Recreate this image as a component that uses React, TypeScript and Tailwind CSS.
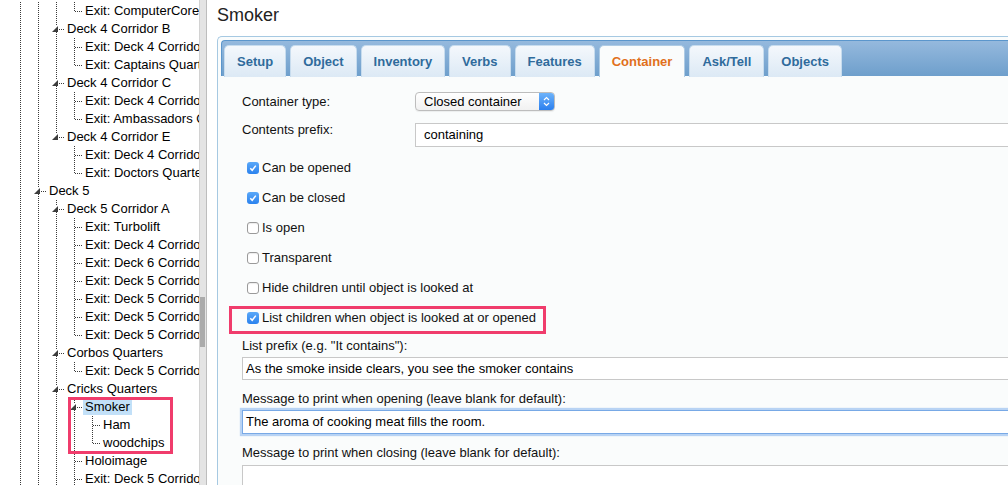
type Row = { t: string; d: number; g: number[]; last?: boolean; open?: boolean; sel?: boolean };

const rows: Row[] = [
  { t: "Exit: ComputerCore", d: 4, g: [1, 1, 1], last: true },
  { t: "Deck 4 Corridor B", d: 3, g: [1, 1], open: true },
  { t: "Exit: Deck 4 Corridor A", d: 4, g: [1, 1, 1] },
  { t: "Exit: Captains Quarters", d: 4, g: [1, 1, 1], last: true },
  { t: "Deck 4 Corridor C", d: 3, g: [1, 1], open: true },
  { t: "Exit: Deck 4 Corridor B", d: 4, g: [1, 1, 1] },
  { t: "Exit: Ambassadors Quarters", d: 4, g: [1, 1, 1], last: true },
  { t: "Deck 4 Corridor E", d: 3, g: [1, 1], open: true, last: true },
  { t: "Exit: Deck 4 Corridor D", d: 4, g: [1, 1, 0] },
  { t: "Exit: Doctors Quarters", d: 4, g: [1, 1, 0], last: true },
  { t: "Deck 5", d: 2, g: [1], open: true },
  { t: "Deck 5 Corridor A", d: 3, g: [1, 1], open: true },
  { t: "Exit: Turbolift", d: 4, g: [1, 1, 1] },
  { t: "Exit: Deck 4 Corridor E", d: 4, g: [1, 1, 1] },
  { t: "Exit: Deck 6 Corridor A", d: 4, g: [1, 1, 1] },
  { t: "Exit: Deck 5 Corridor B", d: 4, g: [1, 1, 1] },
  { t: "Exit: Deck 5 Corridor C", d: 4, g: [1, 1, 1] },
  { t: "Exit: Deck 5 Corridor D", d: 4, g: [1, 1, 1] },
  { t: "Exit: Deck 5 Corridor E", d: 4, g: [1, 1, 1], last: true },
  { t: "Corbos Quarters", d: 3, g: [1, 1], open: true },
  { t: "Exit: Deck 5 Corridor A", d: 4, g: [1, 1, 1], last: true },
  { t: "Cricks Quarters", d: 3, g: [1, 1], open: true },
  { t: "Smoker", d: 4, g: [1, 1, 1], open: true, sel: true },
  { t: "Ham", d: 5, g: [1, 1, 1, 1] },
  { t: "woodchips", d: 5, g: [1, 1, 1, 1], last: true },
  { t: "Holoimage", d: 4, g: [1, 1, 1] },
  { t: "Exit: Deck 5 Corridor A", d: 4, g: [1, 1, 1] },
];

const dot = { stroke: "#3a3a3a", strokeDasharray: "1 1", shapeRendering: "crispEdges" as const };

function Guide({ kind, last }: { kind: "line" | "none" | "leaf" | "open"; last?: boolean }) {
  return (
    <svg width="18" height="18" className="shrink-0">
      {kind === "line" && <line x1="9.5" y1="0" x2="9.5" y2="18" {...dot} />}
      {kind === "leaf" && (
        <>
          <line x1="9.5" y1="0" x2="9.5" y2={last ? 10 : 18} {...dot} />
          <line x1="10" y1="9.5" x2="17" y2="9.5" {...dot} />
        </>
      )}
      {kind === "open" && (
        <>
          <line x1="9.5" y1="0" x2="9.5" y2="6" {...dot} />
          {!last && <line x1="9.5" y1="12" x2="9.5" y2="18" {...dot} />}
          <polygon points="11,6 11,12 5,12" fill="#3c3c3c" />
          <line x1="12" y1="9.5" x2="17" y2="9.5" {...dot} />
        </>
      )}
    </svg>
  );
}

function Tree() {
  return (
    <div className="relative w-[199px] overflow-hidden pt-[2px]">
      {rows.map((r, i) => (
        <div key={i} className="flex h-[18px] items-center pl-[11px]">
          {r.g.map((on, k) => (
            <Guide key={k} kind={on ? "line" : "none"} />
          ))}
          <Guide kind={r.open ? "open" : "leaf"} last={r.last} />
          <span
            className={`whitespace-nowrap px-[2px] text-[13px] leading-[16px] text-black ${r.sel ? "bg-[#c2e0f8]" : ""}`}
          >
            {r.t}
          </span>
        </div>
      ))}
      <div className="absolute left-[68px] top-[397px] h-[57px] w-[105px] border-[3px] border-[#f03c6c]" />
    </div>
  );
}

function Check({ on }: { on?: boolean }) {
  return on ? (
    <span className="flex h-[12px] w-[12px] items-center justify-center rounded-[3px] bg-linear-to-b from-[#5aa8f8] to-[#2a82ee]">
      <svg width="10" height="10" viewBox="0 0 10 10">
        <path d="M2.3 5.3 L4.2 7.3 L7.8 2.6" fill="none" stroke="white" strokeWidth="1.5" />
      </svg>
    </span>
  ) : (
    <span className="h-[12px] w-[12px] rounded-[3px] border border-[#9a9a9a] bg-white shadow-[inset_0_1px_1px_rgba(0,0,0,0.08)]" />
  );
}

const tabs = ["Setup", "Object", "Inventory", "Verbs", "Features", "Container", "Ask/Tell", "Objects"];

const checks = [
  { t: "Can be opened", on: true },
  { t: "Can be closed", on: true },
  { t: "Is open" },
  { t: "Transparent" },
  { t: "Hide children until object is looked at" },
  { t: "List children when object is looked at or opened", on: true, mark: true },
];

export default function App() {
  return (
    <div className="flex h-[485px] w-[1008px] overflow-hidden bg-white font-['Liberation_Sans',Arial,sans-serif] text-[13px] text-[#111]">
      <Tree />
      <div className="w-[7px] shrink-0 border-l border-[#d2d2d2] bg-[#e4e4e4]">
        <div className="mt-[297px] h-[50px] w-[5px] bg-[#ababab]" />
      </div>
      <div className="w-px shrink-0 bg-[#bdbdbd]" />

      <div className="min-w-0 flex-1 overflow-hidden pl-[10px] pt-[4px]">
        <h1 className="text-[18px] leading-[22px] text-[#222]">Smoker</h1>

        <div className="mt-[10px] h-[460px] w-[830px] rounded-tl-[5px] border-l border-t border-[#a6c9e2] bg-[#fafcfc]">
          <div className="ml-[3px] mt-[3px] flex h-[36px] items-end gap-1 rounded-tl-[4px] border-l border-t border-[#5b96cc] bg-linear-to-b from-[#95b9dd] to-[#6e9fcc] pl-[2px]">
            {tabs.map((t) => {
              const active = t === "Container";
              return (
                <div
                  key={t}
                  className={`-mb-px flex h-[32px] items-center rounded-t-[5px] border border-b-0 px-3 text-[13px] font-bold ${
                    active
                      ? "border-[#aecbe4] bg-[#fafcfc] text-[#e1701b]"
                      : "border-[#c7dcee] bg-linear-to-b from-[#f4f8fc] to-[#dce9f5] text-[#2f6b9c]"
                  }`}
                >
                  {t}
                </div>
              );
            })}
          </div>

          <div className="pl-[24px] pt-[16px]">
            <div className="flex h-[19px] items-center">
              <span className="w-[173px]">Container type:</span>
              <div className="flex h-[19px] w-[140px] overflow-hidden rounded-[4px] border border-[#bdbdbd] bg-linear-to-b from-white to-[#f1f1f1] shadow-[0_1px_1px_rgba(0,0,0,0.06)]">
                <span className="flex-1 pl-[8px] leading-[17px] text-black">Closed container</span>
                <span className="flex w-[15px] items-center justify-center bg-linear-to-b from-[#6db3fa] to-[#2a7fee]">
                  <svg width="7" height="11" viewBox="0 0 7 11">
                    <path d="M1 4 L3.5 1.5 L6 4 M1 7 L3.5 9.5 L6 7" fill="none" stroke="white" strokeWidth="1.2" />
                  </svg>
                </span>
              </div>
            </div>

            <div className="mt-[12px] flex items-start">
              <span className="-mt-px w-[173px] leading-[16px]">Contents prefix:</span>
              <div className="h-[24px] w-[620px] border border-[#c8c8c8] bg-white pl-[8px] leading-[22px] text-black">
                containing
              </div>
            </div>

            <div className="mt-[6px]">
              {checks.map((c) => (
                <div key={c.t} className="relative flex h-[30px] items-center gap-[3px] pl-[5px]">
                  <Check on={c.on} />
                  <span>{c.t}</span>
                  {c.mark && (
                    <div className="absolute left-[-13px] top-[3px] h-[28px] w-[317px] border-[3px] border-[#f03c6c]" />
                  )}
                </div>
              ))}
            </div>

            <div className="mt-[5px] leading-[16px]">List prefix (e.g. "It contains"):</div>
            <div className="mt-[3px] h-[23px] w-[780px] border border-[#c8c8c8] bg-white pl-[3px] leading-[21px] text-black">
              As the smoke inside clears, you see the smoker contains
            </div>

            <div className="mt-[11px] leading-[16px]">Message to print when opening (leave blank for default):</div>
            <div className="mt-[3px] h-[24px] w-[780px] border border-[#78a9e6] bg-white pl-[3px] leading-[22px] text-black shadow-[0_0_1px_2px_#b8d3f4]">
              The aroma of cooking meat fills the room.
            </div>

            <div className="mt-[11px] leading-[16px]">Message to print when closing (leave blank for default):</div>
            <div className="mt-[4px] h-[40px] w-[780px] border border-[#c8c8c8] bg-white" />
          </div>
        </div>
      </div>
    </div>
  );
}
